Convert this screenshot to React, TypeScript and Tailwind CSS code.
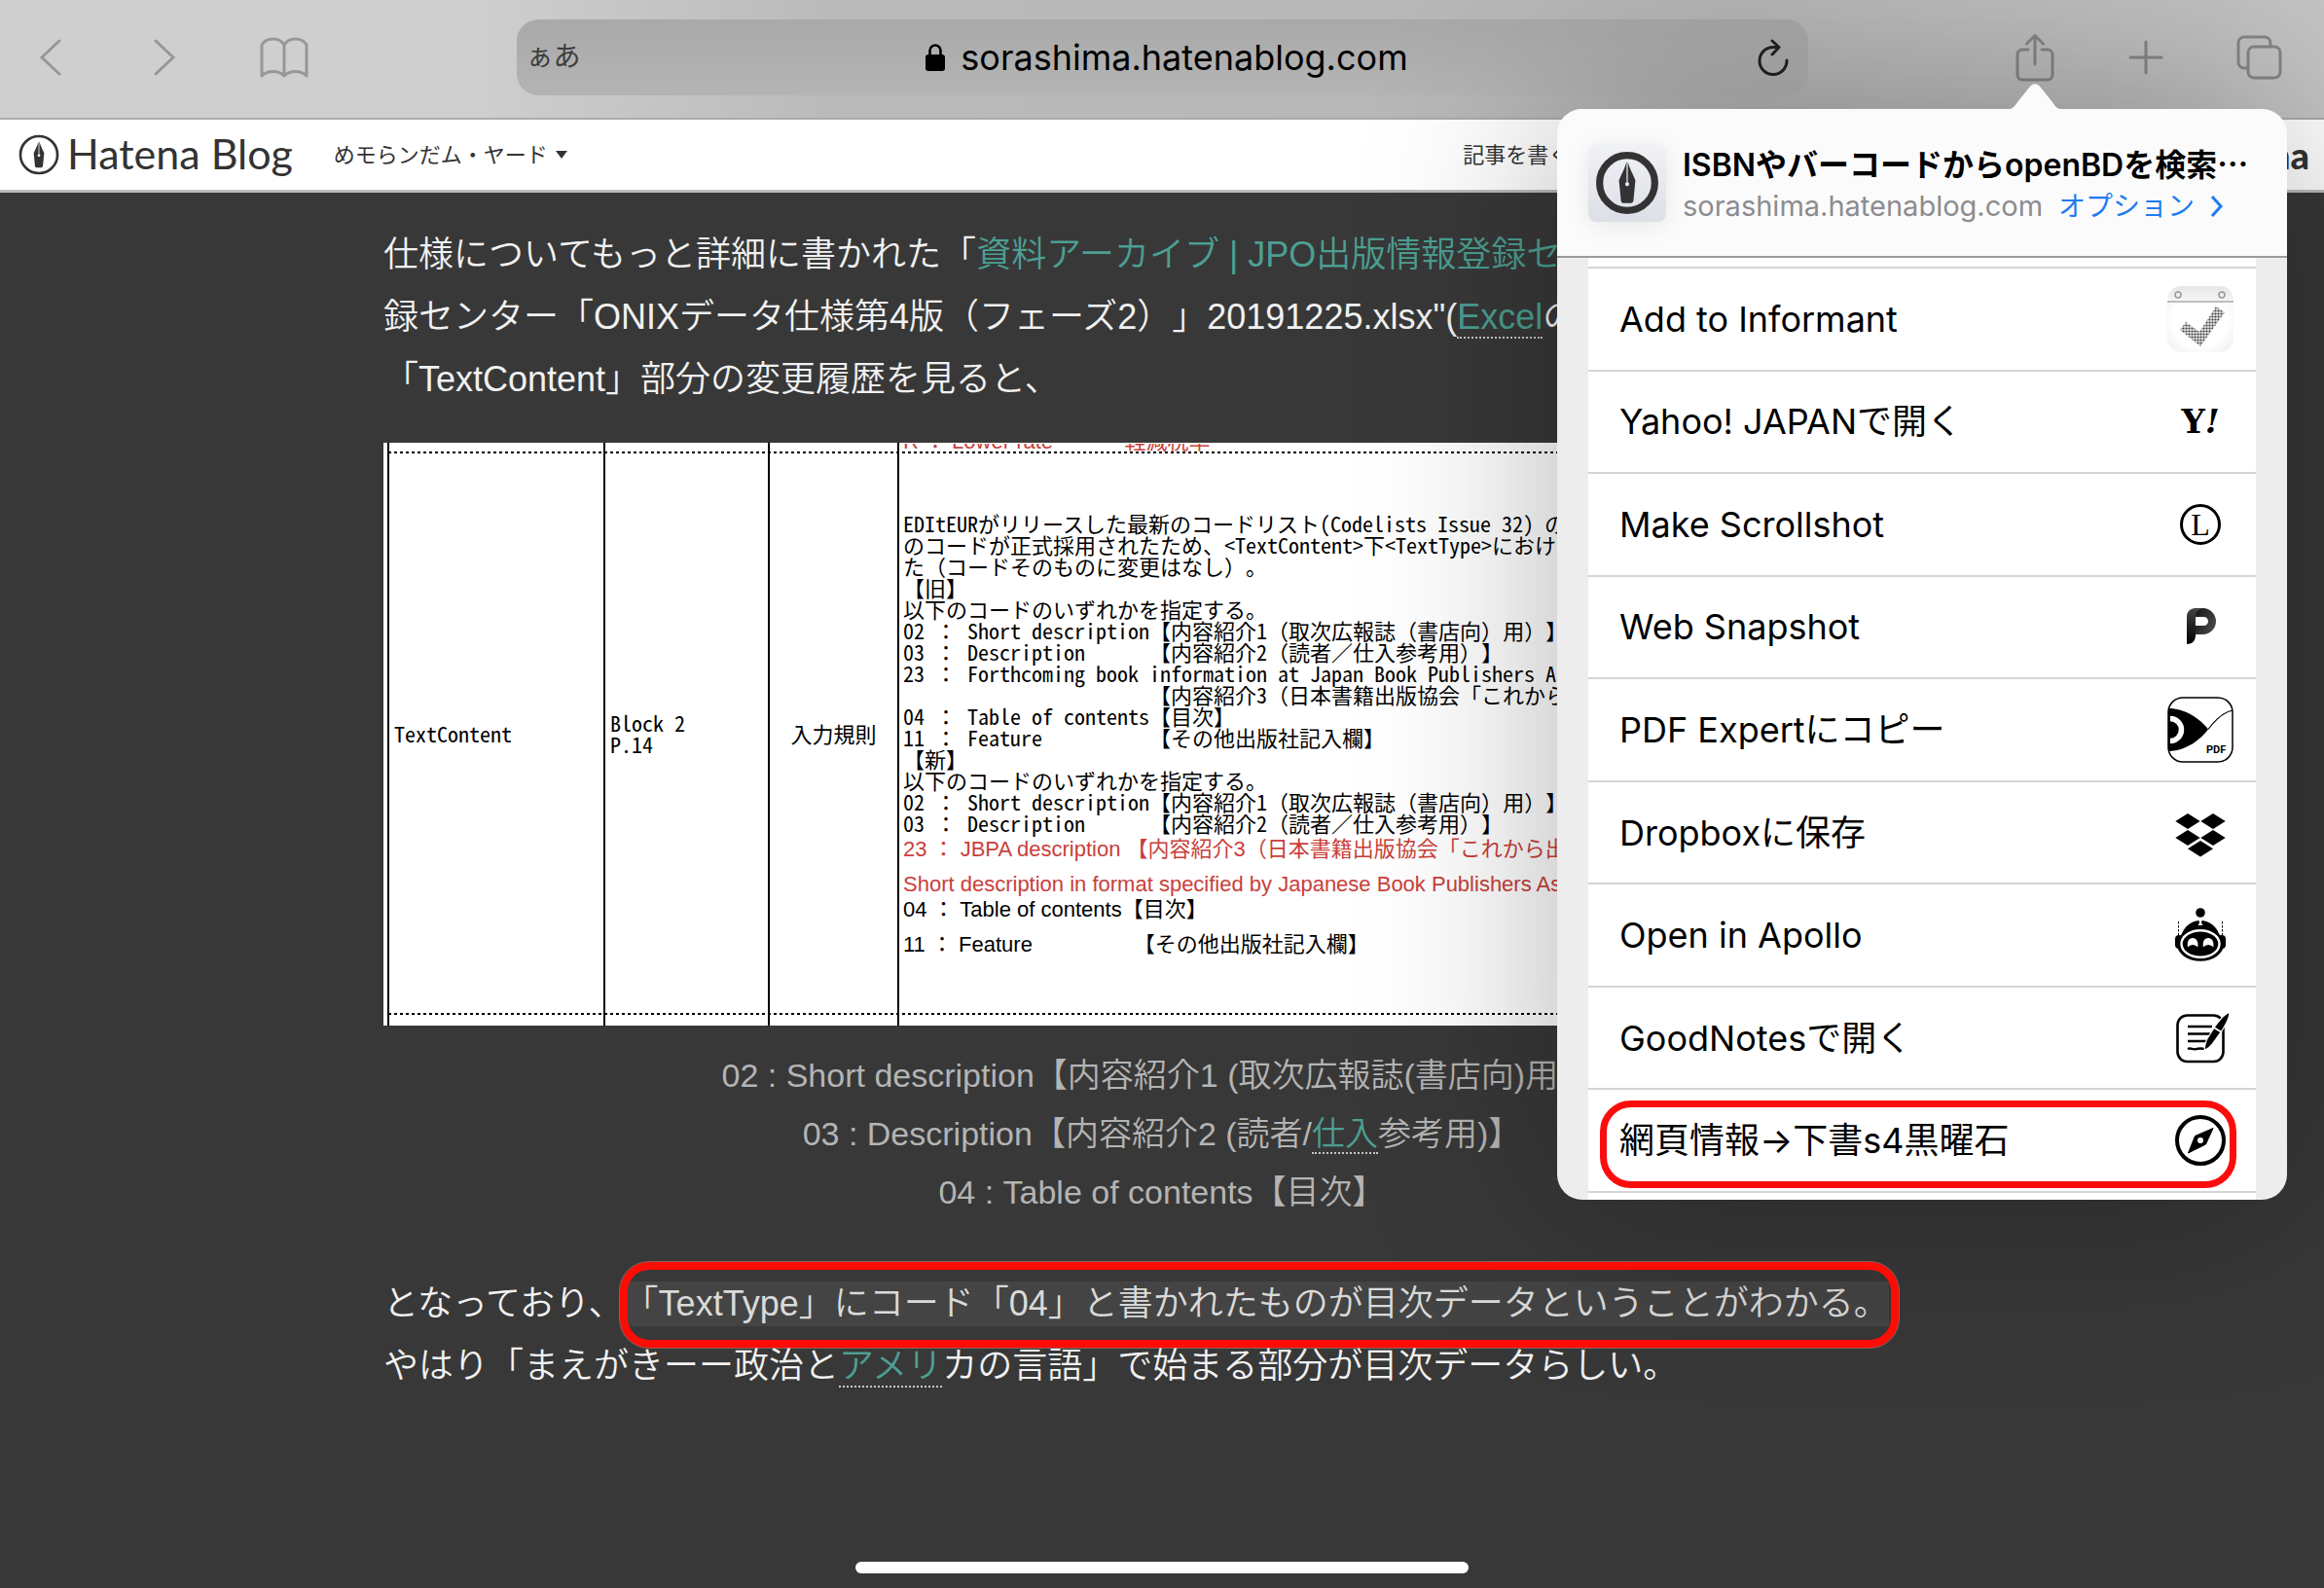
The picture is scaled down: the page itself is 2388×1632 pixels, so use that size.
import type { ReactNode } from 'react';

function PenNib({ className, ring }: { className: string; ring: number }) {
  return (
    <svg viewBox="0 0 64 64" className={className} aria-hidden="true">
      <circle
        cx="32"
        cy="32"
        r={31 - ring / 2}
        fill="none"
        stroke="#333"
        strokeWidth={ring}
      />
      <path
        fill="#333"
        d="M31.4 11c-1.8 6.500-5 12.500-7.600 18.300l2 20.400c.2 1.600 1.200 2.300 2.600 2.300h7.200c1.400 0 2.400-.7 2.600-2.300l2-20.400C37.600 23.500 34.400 17.500 32.600 11v20.300a2 2 0 1 1-1.200 0z"
      />
    </svg>
  );
}

/* Share sheet icons, all on a 68px tile */
function Tile({ children }: { children: ReactNode }) {
  return (
    <svg viewBox="0 0 68 68" className="size-[68px] shrink-0" aria-hidden="true">
      {children}
    </svg>
  );
}

const actions = [
  {
    label: 'Add to Informant',
    icon: (
      <Tile>
        <defs>
          <radialGradient id="tile" cx="50%" cy="50%" r="70%">
            <stop offset="60%" stopColor="#fff" />
            <stop offset="100%" stopColor="#ececec" />
          </radialGradient>
          <linearGradient id="tileTop" x1="0" y1="0" x2="0" y2="1">
            <stop offset="0%" stopColor="#e6e6e6" />
            <stop offset="100%" stopColor="#f6f6f6" />
          </linearGradient>
          <pattern id="dots" width="3" height="3" patternUnits="userSpaceOnUse">
            <rect width="3" height="3" fill="#e4e4e4" />
            <circle cx="1.500" cy="1.500" r="1.100" fill="#3f3f3f" />
          </pattern>
        </defs>
        <rect width="68" height="68" rx="15" fill="url(#tile)" />
        <path d="M0 16v-1C0 6 6 0 15 0h38c9 0 15 6 15 15v1z" fill="url(#tileTop)" />
        <path d="M0 16h68" stroke="#aaa" strokeWidth="1.500" />
        <circle cx="11" cy="9" r="3" fill="none" stroke="#999" strokeWidth="1.500" />
        <circle cx="56" cy="9" r="3" fill="none" stroke="#999" strokeWidth="1.500" />
        <path d="M19 37l-6 8 21 17 25-35-9-6-17 26z" fill="url(#dots)" />
      </Tile>
    ),
  },
  {
    label: 'Yahoo! JAPANで開く',
    icon: (
      <span className="flex w-[68px] shrink-0 items-baseline justify-center font-['DejaVu_Serif','Liberation_Serif',serif] text-[34px] leading-none font-black">
        Y<i>!</i>
      </span>
    ),
  },
  {
    label: 'Make Scrollshot',
    icon: (
      <span className="flex w-[68px] shrink-0 justify-center">
        <span className="flex size-[42px] items-center justify-center rounded-full border-3 border-black font-['Liberation_Serif',serif] text-[32px] leading-none">
          L
        </span>
      </span>
    ),
  },
  {
    label: 'Web Snapshot',
    icon: (
      <Tile>
        <defs>
          <linearGradient id="stem" x1="0" y1="0" x2="0" y2="1">
            <stop offset="0%" stopColor="#444" />
            <stop offset="100%" stopColor="#000" />
          </linearGradient>
          <linearGradient id="bowl" x1="0" y1="0" x2="1" y2="0.600">
            <stop offset="0%" stopColor="#111" />
            <stop offset="100%" stopColor="#484848" />
          </linearGradient>
        </defs>
        <path
          fillRule="evenodd"
          fill="url(#bowl)"
          d="M28 15h8.500a13.500 13.500 0 0 1 0 27H29v-9h8.500a4.500 4.500 0 0 0 0-9H28z"
        />
        <path fill="url(#stem)" d="M37 15h-8c-5.500 0-9 3.500-9 9v28c6 0 9-4 9-9V24c0-5 3-8 8-9z" />
      </Tile>
    ),
  },
  {
    label: 'PDF Expertにコピー',
    icon: (
      <Tile>
        <rect x="1" y="1" width="66" height="66" rx="15" fill="#fff" stroke="#000" strokeWidth="1.500" />
        <path d="M1 12c17 0 32 10 41 21.500C33 46 17 56 1 56z" />
        <path d="M3 22.500a11.500 11.500 0 0 1 0 23" fill="none" stroke="#fff" strokeWidth="5.500" />
        <path d="M42 33.500C49 24 58 16 67 14" fill="none" stroke="#000" strokeWidth="1.200" />
        <text x="40" y="58" fontSize="11" fontWeight="700" fontFamily="Roboto, sans-serif">
          PDF
        </text>
      </Tile>
    ),
  },
  {
    label: 'Dropboxに保存',
    icon: (
      <Tile>
        <path d="M21 14l12.700 8L21 30 8.300 22zM47 14l12.700 8L47 30l-12.700-8zM21 31l12.700 8L21 47 8.300 39zM47 31l12.700 8L47 47l-12.700-8zM34 42l13 8.200-13 8.200-13-8.200z" />
      </Tile>
    ),
  },
  {
    label: 'Open in Apollo',
    icon: (
      <Tile>
        <circle cx="34" cy="11" r="4.800" />
        <path d="M14 35C17 25 25 19 34 19s17 6 20 16z" />
        <ellipse cx="34" cy="43.500" rx="24" ry="17.200" />
        <rect x="8" y="34" width="8" height="14" rx="4" />
        <rect x="52" y="34" width="8" height="14" rx="4" />
        <path d="M11.500 20v14M56.500 20v14" stroke="#000" strokeDasharray="2.500 1.500" />
        <path d="M32.500 18h3l-.5 3.500 1.500 2.500h-5l1.500-2.500z" fill="#fff" />
        <ellipse cx="34" cy="43" rx="19.500" ry="13.800" fill="none" stroke="#fff" strokeWidth="2.400" />
        <path
          fill="#fff"
          d="M21 46.500C20 41 22 37 26 37s6.300 4 5.300 9.500c-2.500-3.500-7.800-3.500-10.300 0zM37 46.500C36 41 38 37 42 37s6.300 4 5.300 9.500c-2.500-3.500-7.800-3.500-10.300 0z"
        />
      </Tile>
    ),
  },
  {
    label: 'GoodNotesで開く',
    icon: (
      <Tile>
        <rect x="10.500" y="10.500" width="47" height="47.500" rx="10" fill="none" stroke="#000" strokeWidth="2.600" />
        <path
          d="M21 22h25M21 29.500h23M21 37h20M21 45c3-1.500 5 1 8 .2s6-1.500 10 .3"
          fill="none"
          stroke="#000"
          strokeWidth="2.400"
        />
        <path
          d="M64 7.500c-5 1-12 10-15.500 15L41 34.500c-2 4-2.500 8-3 12 3-1.500 6-3.500 8.500-7l9-12.500C59.500 21 64 13 64 7.500z"
          stroke="#fff"
          strokeWidth="1.200"
        />
        <path d="M47 22.500l9 5.500" stroke="#fff" strokeWidth="1.800" />
      </Tile>
    ),
  },
  {
    label: '網頁情報→下書s4黒曜石',
    marked: true,
    icon: (
      <Tile>
        <circle cx="34" cy="34" r="24" fill="none" stroke="#000" strokeWidth="4" />
        <path d="M47 21.500L39.500 38 21.500 47 28.500 29.500z" strokeLinejoin="round" stroke="#000" />
        <circle cx="34" cy="34" r="3" fill="#fff" />
      </Tile>
    ),
  },
];

const codeList = [
  'EDItEURがリリースした最新のコードリスト(Codelists Issue 32) の',
  'のコードが正式採用されたため、<TextContent>下<TextType>における',
  'た（コードそのものに変更はなし）。',
  '【旧】',
  '以下のコードのいずれかを指定する。',
  '02 ： Short description【内容紹介1（取次広報誌（書店向）用）】',
  '03 ： Description      【内容紹介2（読者／仕入参考用）】',
  '23 ： Forthcoming book information at Japan Book Publishers A',
  '                       【内容紹介3（日本書籍出版協会「これから',
  '04 ： Table of contents【目次】',
  '11 ： Feature          【その他出版社記入欄】',
  '【新】',
  '以下のコードのいずれかを指定する。',
  '02 ： Short description【内容紹介1（取次広報誌（書店向）用）】',
  '03 ： Description      【内容紹介2（読者／仕入参考用）】',
];

// Half-width forms for the Latin text only, the wide punctuation keeps its full cell
function CodeLine({ line }: { line: string }) {
  return (
    <p>
      {line.split(/([（）：／])/).map((part, i) =>
        i % 2 ? (
          <span key={i} className="[font-feature-settings:normal]">
            {part}
          </span>
        ) : (
          part
        ),
      )}
    </p>
  );
}

function Toolbar() {
  return (
    <div className="flex h-[123px] items-center border-b-2 border-[#ababab] bg-[linear-gradient(90deg,#cfcfcf_20%,#bababa_36%,#b6b6b6_75%,#c4c4c4)] pb-1 text-[#979797]">
      <nav className="flex flex-1 items-center">
        <button aria-label="戻る" className="ml-[40px]">
          <svg viewBox="0 0 24 40" className="h-10 w-6 fill-none stroke-current stroke-3" strokeLinecap="round">
            <path d="M21 3L3 20l18 17" />
          </svg>
        </button>
        <button aria-label="進む" className="ml-[93px]">
          <svg viewBox="0 0 24 40" className="h-10 w-6 fill-none stroke-current stroke-3" strokeLinecap="round">
            <path d="M3 3l18 17L3 37" />
          </svg>
        </button>
        <button aria-label="ブックマーク" className="ml-[86px]">
          <svg viewBox="0 0 50 44" className="h-11 w-[50px] fill-none stroke-current stroke-3" strokeLinejoin="round">
            <path d="M25 41c-6-6-17-6-23 0V9c5-8 18-8 23 0 5-8 18-8 23 0v32c-6-6-17-6-23 0zM25 9v32" />
          </svg>
        </button>
      </nav>

      <div className="flex h-[78px] w-[1327px] items-center rounded-[22px] bg-linear-to-b from-[#a9a9a9] to-[#b4b4b4] text-black">
        <button aria-label="表示設定" className="w-24 pl-[10px] text-left text-[28px] text-[#3d3d3d]">
          ぁあ
        </button>
        <div className="flex flex-1 items-center justify-center gap-4 pl-[10px]">
          <svg viewBox="0 0 20 29" className="h-[29px] w-5" aria-hidden="true">
            <path d="M4.500 13V8a5.500 5.500 0 0 1 11 0v5" fill="none" stroke="#000" strokeWidth="2.600" />
            <rect y="12" width="20" height="17" rx="3" />
          </svg>
          <input
            aria-label="アドレス"
            readOnly
            value="sorashima.hatenablog.com"
            className="field-sizing-content font-['Inter',sans-serif] text-[36px]"
          />
        </div>
        <button aria-label="再読み込み" className="flex w-24 justify-end pr-5">
          <svg viewBox="0 0 32 38" className="h-[38px] w-8 fill-none stroke-[#222] stroke-3" strokeLinecap="round" strokeLinejoin="round">
            <path d="M30 22a14 14 0 1 1-14-13.500h6M15 2l7 6.500-7 7.500" />
          </svg>
        </button>
      </div>

      <div className="flex flex-1 items-center justify-end text-[#868686]">
        <button aria-label="共有" className="mr-[76px]">
          <svg viewBox="0 0 40 50" className="h-[50px] w-10 fill-none stroke-current stroke-3" strokeLinecap="round" strokeLinejoin="round">
            <path d="M13 17H7a5 5 0 0 0-5 5v21a5 5 0 0 0 5 5h26a5 5 0 0 0 5-5V22a5 5 0 0 0-5-5h-6M20 32V3M11.500 11L20 2.500l8.500 8.500" />
          </svg>
        </button>
        <button aria-label="新規タブ" className="mr-[75px]">
          <svg viewBox="0 0 36 36" className="size-9 fill-none stroke-current stroke-3" strokeLinecap="round">
            <path d="M18 2v32M2 18h32" />
          </svg>
        </button>
        <button aria-label="タブ一覧" className="mr-[43px]">
          <svg viewBox="0 0 47 46" className="h-[46px] w-[47px] fill-none stroke-current stroke-3">
            <path d="M12 34H8a6 6 0 0 1-6-6V8a6 6 0 0 1 6-6h21a6 6 0 0 1 6 6v4" />
            <rect x="12" y="12" width="33" height="32" rx="6" />
          </svg>
        </button>
      </div>
    </div>
  );
}

function BlogHeader() {
  return (
    <header className="flex h-[75px] items-center border-b-3 border-[#b9bcbe] bg-white px-[15px] text-[22px] text-[#333]">
      <a href="#" className="flex items-center pl-1">
        <PenNib className="size-[42px]" ring={4} />
        <span className="ml-2 pb-1 font-['Lato',sans-serif] text-[43px] leading-none">Hatena Blog</span>
      </a>
      <button className="ml-[42px] flex items-center gap-2">
        めモらンだム・ヤード
        <svg viewBox="0 0 12 8" className="h-2 w-3" aria-hidden="true">
          <path d="M0 0h12L6 8z" fill="#333" />
        </svg>
      </button>
      <a href="#" className="ml-auto">
        記事を書く
      </a>
      <a href="#" className="ml-[636px] font-['Lato',sans-serif] text-[38px] leading-none font-black">
        Hatena
      </a>
    </header>
  );
}

function SpecTable() {
  return (
    <div className="mt-[33px] h-[599px] overflow-hidden bg-white pl-1 text-[22px] leading-[22px] font-normal text-black">
      <table className="w-full table-fixed border-collapse text-left">
        <colgroup>
          <col className="w-[222px]" />
          <col className="w-[169px]" />
          <col className="w-[133px]" />
          <col />
        </colgroup>
        <tbody>
          <tr className="h-[11px] bg-[repeating-linear-gradient(90deg,#000_0_3px,transparent_3px_6px)] bg-[length:100%_2px] bg-bottom bg-no-repeat">
            <td className="border-x-2 border-black p-0" />
            <td className="border-x-2 border-black p-0" />
            <td className="border-x-2 border-black p-0" />
            <td className="p-0 pl-1">
              <div className="flex h-[9px] items-end overflow-hidden whitespace-pre text-[#c9403a]">
                R ： Lower rate            軽減税率
              </div>
            </td>
          </tr>
          <tr className="h-[577px] bg-[repeating-linear-gradient(90deg,#000_0_3px,transparent_3px_6px)] bg-[length:100%_2px] bg-bottom bg-no-repeat font-['Noto_Sans_CJK_JP',sans-serif] [font-feature-settings:'hwid']">
            <td className="border-x-2 border-black pt-0 pr-0 pb-1 pl-[5px]">TextContent</td>
            <td className="border-x-2 border-black pt-0 pr-0 pb-1 pl-[5px]">
              Block 2<br />
              P.14
            </td>
            <td className="border-x-2 border-black pt-0 pb-1 text-center">入力規則</td>
            <td className="overflow-hidden pt-0 pr-0 pb-[2px] pl-1 whitespace-pre">
              {codeList.map((line, i) => (
                <CodeLine key={i} line={line} />
              ))}
              <div className="font-['Liberation_Sans','Noto_Sans_CJK_JP',sans-serif] [font-feature-settings:normal]">
                <p className="mt-[6px] text-[#c9403a]">
                  23 ： JBPA description 【内容紹介3（日本書籍出版協会「これから出
                </p>
                <p className="mt-[14px] text-[#c9403a]">
                  Short description in format specified by Japanese Book Publishers Association
                </p>
                <p className="mt-1">04 ： Table of contents【目次】</p>
                <p className="mt-[14px]">11 ： Feature                 【その他出版社記入欄】</p>
              </div>
            </td>
          </tr>
          <tr className="h-3">
            <td className="border-x-2 border-black p-0" />
            <td className="border-x-2 border-black p-0" />
            <td className="border-x-2 border-black p-0" />
            <td className="p-0" />
          </tr>
        </tbody>
      </table>
    </div>
  );
}

function Keyword({ children }: { children: ReactNode }) {
  return (
    <a href="#" className="border-b-2 border-dotted border-[#c8c8c8] text-[#4c9f92]">
      {children}
    </a>
  );
}

function Article() {
  return (
    <article className="mx-auto w-[1600px] max-w-full pt-8 text-[36px] leading-[64px] font-[350] text-[#f1f1f1]">
      <p className="whitespace-nowrap">
        仕様についてもっと詳細に書かれた「
        <a href="#" className="text-[#4c9f92]">
          資料アーカイブ | JPO出版情報登録センター
        </a>
        <br />
        録センター「ONIXデータ仕様第4版（フェーズ2）」20191225.xlsx"(<Keyword>Excel</Keyword>の
        <br />
        「TextContent」部分の変更履歴を見ると、
      </p>

      <SpecTable />

      <p className="mt-[21px] text-center text-[34px] leading-[60px] text-[#b4b4b4]">
        02 : Short description【内容紹介1 (取次広報誌(書店向)用)】
        <br />
        03 : Description【内容紹介2 (読者/<Keyword>仕入</Keyword>参考用)】
        <br />
        04 : Table of contents【目次】
      </p>

      <p className="mt-[53px] whitespace-nowrap">
        となっており、
        <mark className="relative inline-block bg-[#444] leading-[46px] text-[#dadada]">
          「TextType」にコード「04」と書かれたものが目次データということがわかる。
          <span className="absolute -top-5 -right-[10px] -bottom-[22px] -left-1 z-20 rounded-[30px] border-8 border-[#fb0d05] outline outline-[#f08080]/50" />
        </mark>
        <br />
        やはり「まえがきーー政治と<Keyword>アメリ</Keyword>カの言語」で始まる部分が目次データらしい。
      </p>
    </article>
  );
}

function ShareSheet() {
  return (
    <aside className="absolute top-[112px] right-[38px] z-10 w-[750px] rounded-[26px] bg-[#ededed] font-['Inter','Noto_Sans_CJK_JP',sans-serif] text-black shadow-[0_0_200px_rgba(0,0,0,0.3)]">
      <svg viewBox="0 0 64 27" className="absolute -top-[26px] right-[227px] h-[27px] w-16" aria-hidden="true">
        <path d="M0 27c8 0 11-3 14-8L26 4c4-5 8-5 12 0l12 15c3 5 6 8 14 8z" fill="#fbfbfb" />
      </svg>

      <div className="flex h-[153px] items-center rounded-t-[26px] border-b-2 border-[#9b9b9b] bg-[#fbfbfb] pl-8">
        <div className="flex size-20 items-center justify-center rounded-lg bg-linear-to-b from-[#f1f2f6] to-[#dcdfe6] shadow-[0_4px_24px_rgba(0,0,0,0.08)]">
          <PenNib className="size-[66px]" ring={7} />
        </div>
        <div className="ml-[17px] flex flex-col gap-[2px] pt-1">
          <h2 className="text-[32px] leading-10 font-semibold whitespace-nowrap">
            ISBNやバーコードからopenBDを検索<span className="font-['Noto_Sans_CJK_JP']">…</span>
          </h2>
          <div className="flex items-center text-[29px] leading-10 text-[#8c8c8f]">
            sorashima.hatenablog.com
            <button className="ml-4 flex items-center gap-4 text-[28px] text-[#1f7bf0]">
              オプション
              <svg viewBox="0 0 14 22" className="h-[22px] w-[14px] fill-none stroke-current stroke-3" aria-hidden="true">
                <path d="M2 1l9 10-9 10" />
              </svg>
            </button>
          </div>
        </div>
      </div>

      <div className="mx-8 bg-white pt-[9px] pb-[7px]">
        <ul className="grid h-[952px] auto-rows-fr border-t-2 border-[#d4d4d6]">
          {actions.map((action) => (
            <li key={action.label} className="relative border-b-2 border-[#d4d4d6]">
              <button className="flex size-full items-center justify-between pr-[23px] pl-8 text-left text-[36px]">
                {action.label}
                {action.icon}
              </button>
              {action.marked && (
                <span className="pointer-events-none absolute top-[11px] right-5 bottom-[3px] left-3 rounded-[32px] border-[7px] border-[#fb0d0d]" />
              )}
            </li>
          ))}
        </ul>
      </div>
    </aside>
  );
}

export default function App() {
  return (
    <div className="relative min-h-screen overflow-hidden bg-[#383838] font-['Liberation_Sans','Noto_Sans_CJK_JP',sans-serif] [text-spacing-trim:space-all]">
      <Toolbar />
      <BlogHeader />
      <Article />
      <ShareSheet />
      <div className="absolute bottom-[15px] left-1/2 h-3 w-[630px] -translate-x-1/2 rounded-full bg-white" />
    </div>
  );
}
